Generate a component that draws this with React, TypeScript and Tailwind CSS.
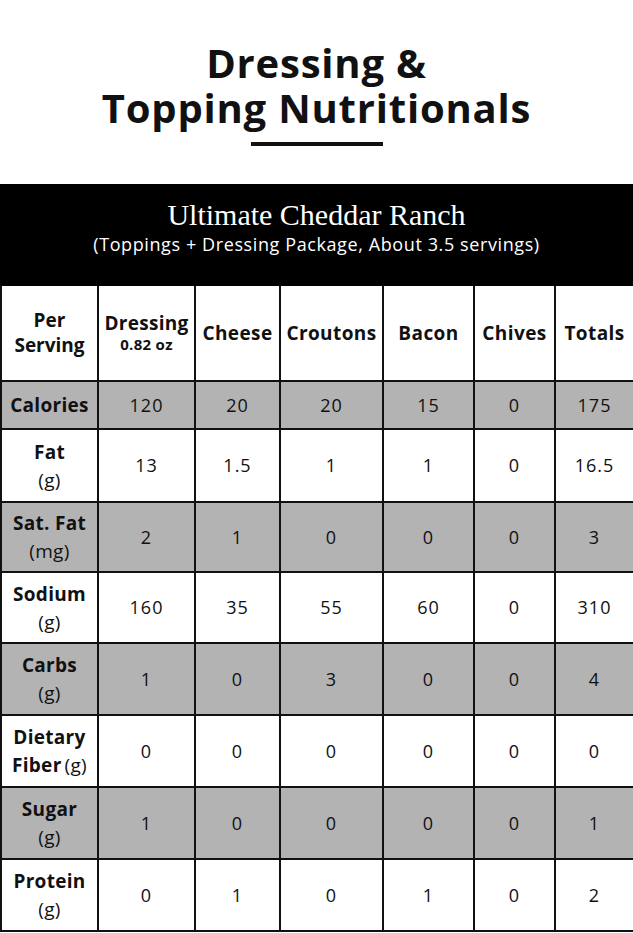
import * as React from "react";

type Row = {
  label: React.ReactNode;
  values: string[];
  shaded: boolean;
  h: string;
};

const sans = "font-['Open_Sans','Lato',sans-serif]";

const rows: Row[] = [
  { label: <span className="font-bold">Calories</span>, values: ["120", "20", "20", "15", "0", "175"], shaded: true, h: "h-[48px]" },
  { label: <><span className="font-bold">Fat</span><br />(g)</>, values: ["13", "1.5", "1", "1", "0", "16.5"], shaded: false, h: "h-[73px]" },
  { label: <><span className="font-bold">Sat. Fat</span><br />(mg)</>, values: ["2", "1", "0", "0", "0", "3"], shaded: true, h: "h-[70px]" },
  { label: <><span className="font-bold">Sodium</span><br />(g)</>, values: ["160", "35", "55", "60", "0", "310"], shaded: false, h: "h-[71px]" },
  { label: <><span className="font-bold">Carbs</span><br />(g)</>, values: ["1", "0", "3", "0", "0", "4"], shaded: true, h: "h-[72px]" },
  { label: <><span className="font-bold">Dietary</span><br /><span className="font-bold">Fiber</span><span className="ml-[3px]">(g)</span></>, values: ["0", "0", "0", "0", "0", "0"], shaded: false, h: "h-[72px]" },
  { label: <><span className="font-bold">Sugar</span><br />(g)</>, values: ["1", "0", "0", "0", "0", "1"], shaded: true, h: "h-[72px]" },
  { label: <><span className="font-bold">Protein</span><br />(g)</>, values: ["0", "1", "0", "1", "0", "2"], shaded: false, h: "h-[72px]" },
];

const headers = ["Cheese", "Croutons", "Bacon", "Chives", "Totals"];

export default function App() {
  return (
    <div className={`w-[633px] bg-white text-[#111] ${sans}`}>
      <div className="flex h-[184px] flex-col items-center pt-[40px]">
        <h1 className="text-center text-[40px] font-bold leading-[45px] tracking-[0.8px]">
          Dressing &amp;
          <br />
          Topping Nutritionals
        </h1>
        <div className="mt-[12px] h-[4px] w-[132px] bg-[#111]" />
      </div>

      <div className="flex h-[102px] flex-col items-center bg-black pt-[13px] text-white">
        <div className="font-['Liberation_Serif',serif] text-[30px] leading-[35px]">
          Ultimate Cheddar Ranch
        </div>
        <div className="mt-[1px] text-[18px] leading-[22px] tracking-[0.6px]">
          (Toppings + Dressing Package, About 3.5 servings)
        </div>
      </div>

      <table className="w-[633px] table-fixed border-collapse text-center">
        <colgroup>
          <col className="w-[97px]" />
          <col className="w-[97px]" />
          <col className="w-[85px]" />
          <col className="w-[103px]" />
          <col className="w-[91px]" />
          <col className="w-[81px]" />
          <col className="w-[79px]" />
        </colgroup>
        <thead>
          <tr className="h-[95px]">
            <th className="border-2 border-t-0 border-[#111] text-[19px] font-bold leading-[25px]">
              Per
              <br />
              Serving
            </th>
            <th className="border-2 border-t-0 border-[#111] px-0 text-[19px] font-bold leading-[20px] tracking-[0.3px]">
              Dressing
              <br />
              <span className="text-[15px]">0.82 oz</span>
            </th>
            {headers.map((h) => (
              <th key={h} className="border-2 border-t-0 border-[#111] px-0 text-[19px] font-bold tracking-[0.4px]">
                {h}
              </th>
            ))}
          </tr>
        </thead>
        <tbody>
          {rows.map((r, i) => (
            <tr key={i} className={`${r.h} ${r.shaded ? "bg-[#b3b3b3]" : "bg-white"}`}>
              <td className="border-2 border-[#111] px-0 text-[19px] leading-[28px] tracking-[0.3px]">{r.label}</td>
              {r.values.map((v, j) => (
                <td key={j} className="border-2 border-[#111] text-[18px] tracking-[1px]">
                  {v}
                </td>
              ))}
            </tr>
          ))}
        </tbody>
      </table>
    </div>
  );
}
